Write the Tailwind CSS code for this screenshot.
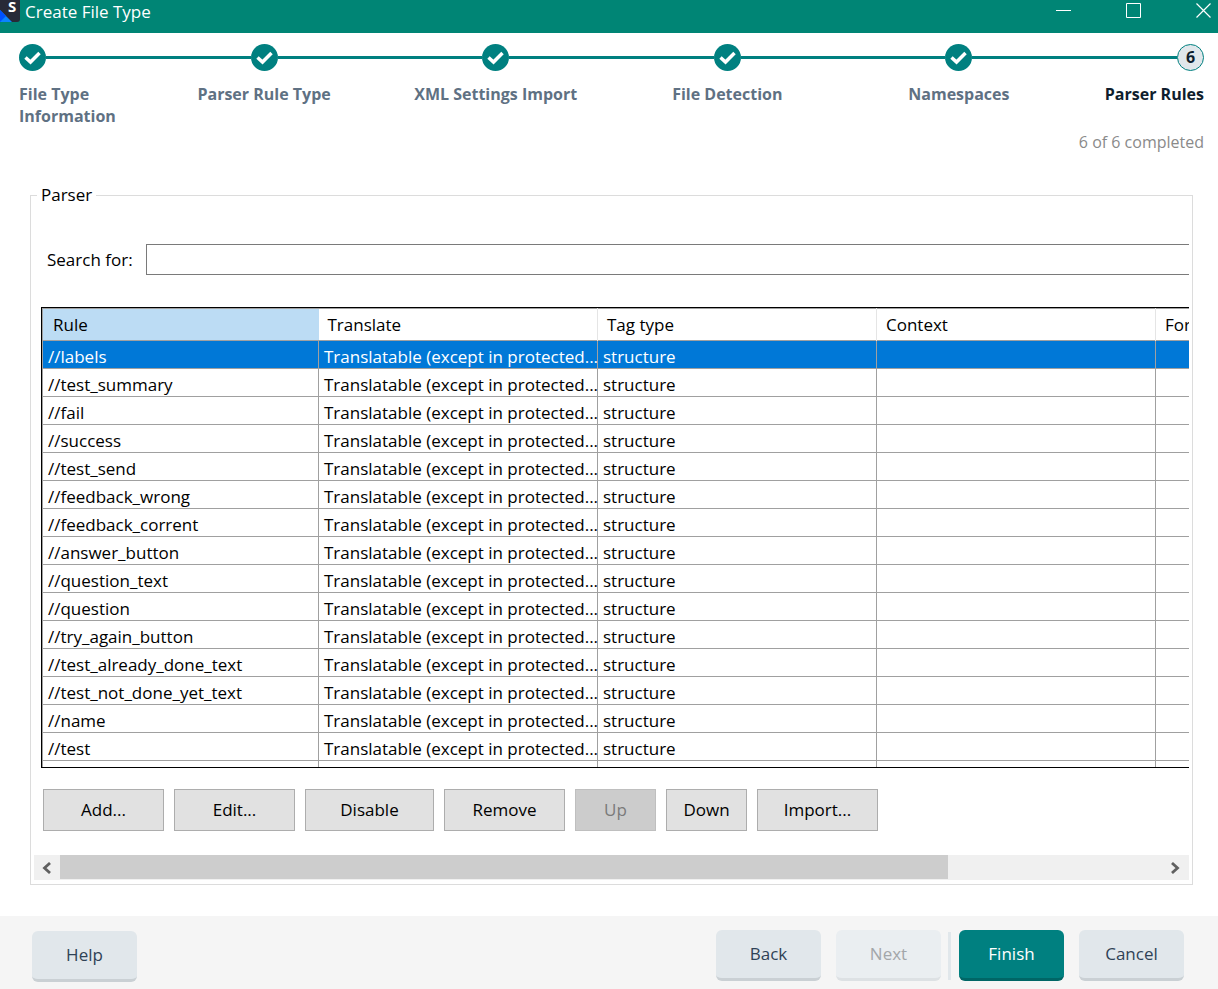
<!DOCTYPE html>
<html lang="en">
<head>
  <meta charset="UTF-8" />
  <meta name="viewport" content="width=device-width, initial-scale=1.0"/>
  <title>Create File Type</title>
  <script src="https://cdn.jsdelivr.net/npm/@tailwindcss/browser@4"></script>
</head>
<body class="bg-white min-h-screen flex flex-col overflow-x-hidden font-['Open_Sans','Noto_Sans',sans-serif] text-[17px] leading-[22px] text-black">
  <!-- Title bar -->
  <header class="flex items-start justify-between h-[33px] bg-[#008575] text-white">
    <div class="flex items-start gap-[5px]">
      <svg class="w-5 h-[22px]" viewBox="0 0 20 22" aria-hidden="true">
        <path d="M0 0H20V19Q20 22 17 22H0Z" fill="#282a37"/>
        <path d="M0 10L12 22H0Z" fill="#0a84ff"/>
        <path d="M0 10L6 16L0 22Z" fill="#0050ff"/>
        <text x="8" y="12" font-family="Open Sans" font-size="15" font-weight="700" fill="#fff">S</text>
      </svg>
      <h1 class="text-[17px] leading-6">Create File Type</h1>
    </div>
    <div class="flex gap-[55px] pt-[3px] pr-[7px]">
      <button type="button" aria-label="Minimize"><svg class="w-[15px] h-[15px]" viewBox="0 0 15 15" stroke="#fff"><path d="M0 7.5H15"/></svg></button>
      <button type="button" aria-label="Maximize"><svg class="w-[15px] h-[15px]" viewBox="0 0 15 15" stroke="#fff" fill="none"><path d="M.5 .5H14.500V14.500H.5Z"/></svg></button>
      <button type="button" aria-label="Close"><svg class="w-[15px] h-[15px]" viewBox="0 0 15 15" stroke="#fff" stroke-width="1.200"><path d="M.5 .5L14.500 14.500M14.500 .5L.5 14.500"/></svg></button>
    </div>
  </header>

  <!-- Wizard steps -->
  <nav class="pt-[11px] pl-[19px] pr-[14px]">
    <ol id="steps" class="flex font-bold text-base leading-[22px] text-[#5f7183]"></ol>
    <p class="mt-1 text-right text-base leading-[22px] text-[#8a8a8a]">6 of 6 completed</p>
  </nav>

  <!-- Parser rules -->
  <main class="pl-[30px] pr-[25px] mt-8">
    <fieldset class="min-w-0 border border-[#dcdcdc] px-[3px] pb-1">
      <legend class="ml-[3px] px-1 leading-5">Parser</legend>

      <div class="overflow-hidden pl-[7px]">
        <div class="flex items-center w-[1500px] mt-[39px] pl-[6px]">
          <label for="search" class="w-[99px]">Search for:</label>
          <input id="search" type="text" class="flex-1 h-[31px] border border-[#7a7a7a] px-2 outline-none"/>
        </div>

        <div class="w-[1500px] h-[461px] mt-8 border border-black overflow-hidden">
          <table class="table-fixed w-full border-t border-l border-[#a0a0a0]">
            <colgroup>
              <col class="w-[276px]"/><col class="w-[279px]"/><col class="w-[279px]"/><col class="w-[279px]"/><col/>
            </colgroup>
            <thead>
              <tr class="h-8 text-left border-b border-[#a0a0a0]">
                <th class="pl-[10px] font-normal bg-[#bcdcf4]">Rule</th>
                <th class="pl-[9px] font-normal border-r border-[#e5e5e5]">Translate</th>
                <th class="pl-[9px] font-normal border-r border-[#e5e5e5]">Tag type</th>
                <th class="pl-[9px] font-normal border-r border-[#e5e5e5]">Context</th>
                <th class="pl-[9px] font-normal">Formatting</th>
              </tr>
            </thead>
            <tbody id="rules"></tbody>
          </table>
        </div>

        <div class="flex gap-[10px] mt-[21px] pl-[2px]">
          <button type="button" class="w-[121px] h-[42px] bg-[#e1e1e1] border border-[#adadad]">Add...</button>
          <button type="button" class="w-[121px] h-[42px] bg-[#e1e1e1] border border-[#adadad]">Edit...</button>
          <button type="button" class="w-[129px] h-[42px] bg-[#e1e1e1] border border-[#adadad]">Disable</button>
          <button type="button" class="w-[121px] h-[42px] bg-[#e1e1e1] border border-[#adadad]">Remove</button>
          <button type="button" disabled class="w-[81px] h-[42px] bg-[#cccccc] border border-[#bfbfbf] text-[#7a7a7a]">Up</button>
          <button type="button" class="w-[81px] h-[42px] bg-[#e1e1e1] border border-[#adadad]">Down</button>
          <button type="button" class="w-[121px] h-[42px] bg-[#e1e1e1] border border-[#adadad]">Import...</button>
        </div>
      </div>

      <!-- Horizontal scrollbar -->
      <div class="flex h-[25px] mt-6 bg-[#f0f0f0]">
        <button type="button" aria-label="Scroll left" class="w-[26px] flex items-center justify-center">
          <svg class="w-[10px] h-[12px]" viewBox="0 0 10 12" fill="none" stroke="#606060" stroke-width="2.800"><path d="M8 1L2.500 6L8 11"/></svg>
        </button>
        <div class="flex-1"><div class="w-[80.5%] h-6 bg-[#cdcdcd]"></div></div>
        <button type="button" aria-label="Scroll right" class="w-[26px] flex items-center justify-center">
          <svg class="w-[10px] h-[12px]" viewBox="0 0 10 12" fill="none" stroke="#606060" stroke-width="2.800"><path d="M1 1L6.500 6L1 11"/></svg>
        </button>
      </div>
    </fieldset>
  </main>

  <!-- Footer -->
  <footer class="mt-auto flex items-start justify-between h-[73px] pt-[14px] pl-8 pr-[34px] bg-[#f5f5f5] text-[#2f4256]">
    <button type="button" class="w-[105px] h-[51px] mt-px rounded-md border-b-3 border-[#cad0d4] bg-[#e1e7eb]">Help</button>
    <div class="flex">
      <button type="button" class="w-[105px] h-[51px] rounded-md border-b-3 border-[#cad0d4] bg-[#e1e7eb]">Back</button>
      <button type="button" disabled class="w-[105px] h-[51px] ml-[15px] rounded-md border-b-3 border-[#dde1e4] bg-[#eaeef1] text-[#a3a6a9]">Next</button>
      <span class="w-[3px] h-12 mx-[7px] mt-[2px] bg-[#e1e7eb]"></span>
      <button type="button" class="w-[105px] h-[51px] ml-px rounded-md border-b-3 border-[#006666] bg-[#008080] text-white">Finish</button>
      <button type="button" class="w-[105px] h-[51px] ml-[15px] rounded-md border-b-3 border-[#cad0d4] bg-[#e1e7eb]">Cancel</button>
    </div>
  </footer>
</body>

<script>
  const steps = ["File Type<br>Information", "Parser Rule Type", "XML Settings Import", "File Detection", "Namespaces", "Parser Rules"];
  const rules = [
    "labels", "test_summary", "fail", "success", "test_send", "feedback_wrong", "feedback_corrent",
    "answer_button", "question_text", "question", "try_again_button", "test_already_done_text",
    "test_not_done_yet_text", "name", "test", ""
  ];

  const check = `
    <svg class="w-[27px] h-[27px]" viewBox="0 0 27 27">
      <circle cx="13.500" cy="13.500" r="13.500" fill="#008080"/>
      <path d="M6.500 13.500L11.500 18L20.500 9" fill="none" stroke="#fff" stroke-width="3.500"/>
    </svg>`;

  document.getElementById("steps").innerHTML = steps.map((name, i) => {
    const last = i === steps.length - 1;
    const align = i === 0 ? "items-start" : last ? "items-end" : "items-center";
    return `
      <li class="flex ${last ? "flex-none text-[#0f1e2d]" : "flex-1"}">
        <div class="w-[27px] flex flex-col ${align}">
          ${last ? '<span class="w-[27px] h-[27px] rounded-full border border-[#008080] bg-[#e1e7eb] text-center leading-[25px]">6</span>' : check}
          <span class="mt-3 w-max">${name}</span>
        </div>
        ${last ? "" : '<div class="flex-1 h-[3px] mt-3 bg-[#008080]"></div>'}
      </li>`;
  }).join("");

  // the last row is empty and only partly visible
  document.getElementById("rules").innerHTML = rules.map((rule, i) => `
    <tr class="h-7 whitespace-nowrap border-b border-[#a0a0a0] ${i === 0 ? "bg-[#0078d7] text-white" : "bg-white"}">
      <td class="pl-[5px] pt-1 border-r border-[#a0a0a0]">${rule && "//" + rule}</td>
      <td class="pl-[5px] pt-1 border-r border-[#a0a0a0]">${rule && "Translatable (except in protected..."}</td>
      <td class="pl-[5px] pt-1 border-r border-[#a0a0a0]">${rule && "structure"}</td>
      <td class="border-r border-[#a0a0a0]"></td>
      <td></td>
    </tr>`).join("");
</script>
</html>
